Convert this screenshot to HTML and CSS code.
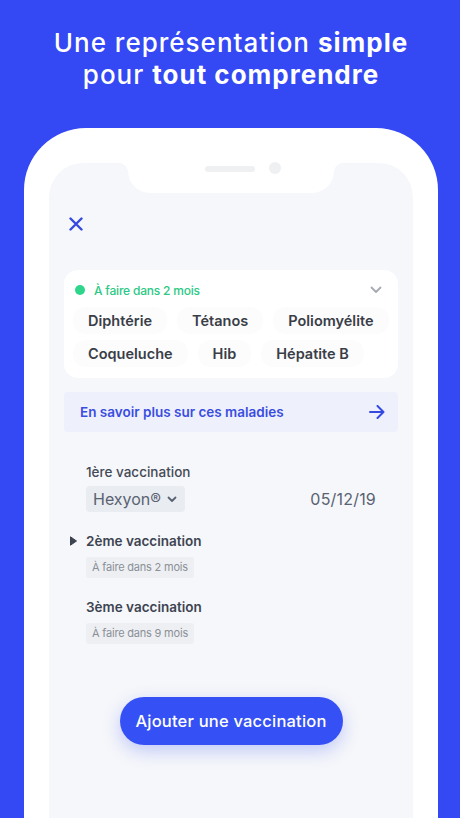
FILE: index.html
```html
<!DOCTYPE html>
<html lang="fr">
<head>
<meta charset="utf-8">
<title>Vaccination</title>
<link rel="stylesheet" href="styles.css">
</head>
<body>
<div class="page">
  <h1 class="hero">Une représentation <b>simple</b><br>pour <b>tout comprendre</b></h1>
  <div class="phone">
    <div class="screen">
      <div class="notch">
        <span class="speaker"></span>
        <span class="camera"></span>
      </div>
      <div class="topbar">
        <svg class="close" width="14" height="14" viewBox="0 0 14 14"><path d="M1.5 1.5 L12.5 12.5 M12.5 1.5 L1.5 12.5" stroke="#3548E0" stroke-width="2.4" stroke-linecap="round"/></svg>
      </div>
      <div class="card">
        <div class="card-head">
          <span class="dot"></span>
          <span class="status">À faire dans 2 mois</span>
          <svg class="chev" width="12" height="8" viewBox="0 0 12 8"><path d="M1.5 1.5 L6 6 L10.5 1.5" fill="none" stroke="#A6AAB2" stroke-width="1.8" stroke-linecap="round" stroke-linejoin="round"/></svg>
        </div>
        <div class="tags">
          <span class="tag">Diphtérie</span>
          <span class="tag">Tétanos</span>
          <span class="tag">Poliomyélite</span>
          <span class="tag">Coqueluche</span>
          <span class="tag">Hib</span>
          <span class="tag">Hépatite B</span>
        </div>
      </div>
      <div class="learn">
        <span>En savoir plus sur ces maladies</span>
        <svg width="16" height="14" viewBox="0 0 16 14"><path d="M1 7 H14.5 M8.5 1 L14.5 7 L8.5 13" fill="none" stroke="#3548E0" stroke-width="2" stroke-linecap="round" stroke-linejoin="round"/></svg>
      </div>
      <div class="list">
        <div class="item">
          <div class="item-title light">1ère vaccination</div>
          <div class="row">
            <span class="brand">Hexyon® <svg width="10" height="7" viewBox="0 0 10 7"><path d="M1.5 1.5 L5 5 L8.5 1.5" fill="none" stroke="#5A6373" stroke-width="1.8" stroke-linecap="round" stroke-linejoin="round"/></svg></span>
            <span class="date">05/12/19</span>
          </div>
        </div>
        <div class="item current">
          <svg class="marker" width="7" height="10" viewBox="0 0 7 10"><path d="M0.5 0.8 L6.5 5 L0.5 9.2 Z" fill="#3D4451" stroke="#3D4451" stroke-linejoin="round"/></svg>
          <div class="item-title">2ème vaccination</div>
          <span class="due">À faire dans 2 mois</span>
        </div>
        <div class="item">
          <div class="item-title">3ème vaccination</div>
          <span class="due">À faire dans 9 mois</span>
        </div>
      </div>
      <div class="actions">
        <button class="add">Ajouter une vaccination</button>
      </div>
    </div>
  </div>
</div>
</body>
</html>
```
FILE: styles.css
```css
* { box-sizing: border-box; }
html, body { margin: 0; padding: 0; }
body {
  background: #3448F4;
  font-family: Inter, "Noto Sans", sans-serif;
  width: 460px;
  height: 818px;
  overflow: hidden;
}
.page {
  display: flex;
  flex-direction: column;
  height: 818px;
}
.hero {
  margin: 0;
  padding: 27px 0 0 2px;
  text-align: center;
  color: #fff;
  font-size: 26px;
  font-weight: 500;
  line-height: 32px;
  letter-spacing: 1px;
}
.hero b { font-weight: 700; }
.phone {
  margin: 37px 0 0 24px;
  width: 414px;
  flex: 1;
  background: #fff;
  border-radius: 62px 62px 0 0;
  padding: 35px 25px 0 25px;
  display: flex;
}
.screen {
  position: relative;
  flex: 1;
  background: #F6F7FA;
  border-radius: 34px 34px 0 0;
  display: flex;
  flex-direction: column;
  padding: 0 15px;
}
.notch {
  position: absolute;
  top: 0;
  left: 79px;
  width: 206px;
  height: 30px;
  background: #fff;
  border-radius: 0 0 22px 22px;
}
.notch::before, .notch::after {
  content: "";
  position: absolute;
  top: 0;
  width: 10px;
  height: 10px;
}
.notch::before { left: -10px; background: radial-gradient(circle at 0 100%, transparent 10px, #fff 10.5px); }
.notch::after { right: -10px; background: radial-gradient(circle at 100% 100%, transparent 10px, #fff 10.5px); }
.speaker {
  position: absolute;
  top: 3px;
  left: 77px;
  width: 50px;
  height: 6px;
  border-radius: 3px;
  background: #EEF0F2;
}
.camera {
  position: absolute;
  top: -1px;
  left: 141px;
  width: 12px;
  height: 12px;
  border-radius: 50%;
  background: #EEF0F2;
}
.topbar {
  height: 107px;
  padding: 54px 0 0 5px;
}
.close { display: block; }
.card {
  background: #fff;
  border-radius: 14px;
  padding: 13px 6px 11px 11px;
}
.card-head {
  display: flex;
  align-items: center;
  height: 14px;
}
.dot {
  width: 10px;
  height: 10px;
  border-radius: 50%;
  background: #2ED58B;
}
.status {
  margin-left: 9px;
  color: #2BC985;
  font-size: 12px;
  font-weight: 500;
  letter-spacing: -0.2px;
  flex: 1;
}
.chev { margin-right: 10px; }
.tags {
  display: flex;
  flex-wrap: wrap;
  gap: 6px 10px;
  margin-top: 10px;
  margin-left: -2px;
}
.tag {
  padding: 0 15px;
  height: 27px;
  line-height: 27px;
  border-radius: 13px;
  background: #FCFCFD;
  color: #3A3E47;
  font-size: 14.5px;
  font-weight: 600;
}
.learn {
  margin-top: 14px;
  height: 40px;
  background: #EEF1FC;
  border-radius: 4px;
  display: flex;
  align-items: center;
  justify-content: space-between;
  padding: 0 13px 0 16px;
  color: #3A4DE0;
  font-size: 13.5px;
  font-weight: 600;
}
.list {
  padding: 31px 22px 0 22px;
  display: flex;
  flex-direction: column;
  gap: 20px;
}
.item { position: relative; }
.item-title {
  color: #3D4451;
  font-size: 13.5px;
  font-weight: 600;
  line-height: 18px;
}
.item-title.light { font-weight: 500; color: #444A55; }
.marker {
  position: absolute;
  left: -16px;
  top: 4px;
}
.row {
  display: flex;
  justify-content: space-between;
  align-items: center;
  margin-top: 5px;
}
.brand {
  display: inline-flex;
  align-items: center;
  gap: 6px;
  height: 26px;
  padding: 0 8px 0 7px;
  background: #E9ECF0;
  border-radius: 4px;
  color: #596272;
  font-size: 16px;
}
.date {
  color: #596272;
  font-size: 16px;
  letter-spacing: 0.2px;
}
.due {
  display: inline-block;
  margin-top: 7px;
  height: 21px;
  line-height: 21px;
  padding: 0 6px;
  background: #EEEFF2;
  border-radius: 3px;
  color: #8A8F98;
  font-size: 11px;
  letter-spacing: -0.2px;
}
.actions {
  display: flex;
  justify-content: center;
  padding-top: 53px;
}
.add {
  width: 223px;
  height: 48px;
  border: none;
  border-radius: 24px;
  background: #3551F5;
  color: #fff;
  font-family: inherit;
  font-size: 16.5px;
  font-weight: 500;
  letter-spacing: 0.2px;
  box-shadow: 0 6px 18px rgba(53, 81, 245, 0.28);
}
```
